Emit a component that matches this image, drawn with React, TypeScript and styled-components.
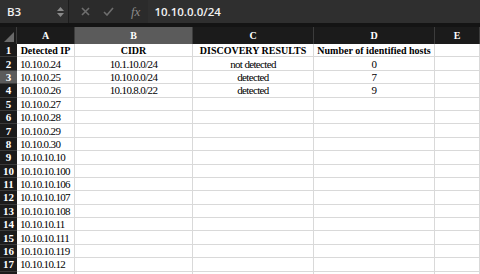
import React from 'react';
import styled, { createGlobalStyle } from 'styled-components';

/**
 * Define stylesheet.
 */
const GlobalStyle = createGlobalStyle`
    html, body {
        margin: 0;
        padding: 0;
        background-color: #ffffff;
        overflow: hidden;
    }
`;
const UI = styled.div`
    width: 480px;
    height: 274px;
    overflow: hidden;
    background-color: #fff;
`;
const Toolbar = styled.div`
    display: flex;
    align-items: center;
    height: 23px;
    background-color: #2b2b2b;
    border-bottom: 4px solid #141414;
    font-family: "Open Sans", "Liberation Sans", sans-serif;
    color: #f2f2f2;
`;
const NameBox = styled.div`
    display: flex;
    align-items: center;
    justify-content: space-between;
    box-sizing: border-box;
    width: 69px;
    height: 100%;
    padding: 0 4px 0 7px;
    background-color: #303030;
    border-right: 1px solid #1d1d1d;
    font-size: 11.5px;
    font-weight: 600;
`;
const Stepper = styled.div`
    display: flex;
    flex-direction: column;
    gap: 2px;
`;
const Actions = styled.div`
    display: flex;
    align-items: center;
    gap: 13px;
    padding: 0 8px 0 12px;
    height: 100%;
`;
const Fx = styled.span`
    font-family: "Liberation Serif", serif;
    font-style: italic;
    font-size: 13px;
    color: #8a8a8a;
    margin-left: 4px;
`;
const FormulaInput = styled.div`
    display: flex;
    align-items: center;
    flex: 1;
    height: 100%;
    padding-left: 6px;
    background-color: #2f2f2f;
    font-size: 11.5px;
    font-weight: 600;
`;
const Grid = styled.div`
    display: grid;
    grid-template-columns: 17px 58px 118px 121px 121px 1fr;
    grid-template-rows: 17px;
    grid-auto-rows: 13.4px;
    font-family: "Liberation Serif", "Times New Roman", serif;
    font-size: 10px;
    color: #000;
`;
const Row = styled.div`
    display: contents;
`;
const ColHead = styled.div<{ active?: boolean }>`
    display: flex;
    align-items: center;
    justify-content: center;
    background-color: ${(p) => p.active ? '#5b5b5b' : '#1b1b1b'};
    border-right: 1px solid #3c3c3c;
    color: #fff;
    font-weight: 700;
    font-size: 10px;
`;
const Corner = styled.div`
    position: relative;
    background-color: #1b1b1b;
    border-right: 1px solid #3c3c3c;
`;
const CornerMark = styled.svg`
    position: absolute;
    right: 2px;
    bottom: 2px;
`;
const RowNum = styled.div<{ active?: boolean }>`
    display: flex;
    align-items: center;
    justify-content: center;
    background-color: ${(p) => p.active ? '#5b5b5b' : '#1b1b1b'};
    border-bottom: 1px solid #3a3a3a;
    color: #fff;
    font-weight: 700;
    font-size: 11px;
`;
const Cell = styled.div<{ align?: string; bold?: boolean }>`
    display: flex;
    align-items: center;
    justify-content: ${(p) => p.align === 'center' ? 'center' : 'flex-start'};
    padding: 0 3px;
    overflow: hidden;
    white-space: nowrap;
    border-right: 1px solid #d9d9d9;
    border-bottom: 1px solid #d9d9d9;
    font-weight: ${(p) => p.bold ? 700 : 400};
    font-size: ${(p) => p.bold ? '10px' : '11px'};
    letter-spacing: ${(p) => p.bold ? '0' : '-0.65px'};
`;

/**
 * Data.
 */
const rows: string[][] = [
    ['Detected IP', 'CIDR', 'DISCOVERY RESULTS', 'Number of identified hosts', ''],
    ['10.10.0.24', '10.1.10.0/24', 'not detected', '0', ''],
    ['10.10.0.25', '10.10.0.0/24', 'detected', '7', ''],
    ['10.10.0.26', '10.10.8.0/22', 'detected', '9', ''],
    ['10.10.0.27', '', '', '', ''],
    ['10.10.0.28', '', '', '', ''],
    ['10.10.0.29', '', '', '', ''],
    ['10.10.0.30', '', '', '', ''],
    ['10.10.10.10', '', '', '', ''],
    ['10.10.10.100', '', '', '', ''],
    ['10.10.10.106', '', '', '', ''],
    ['10.10.10.107', '', '', '', ''],
    ['10.10.10.108', '', '', '', ''],
    ['10.10.10.11', '', '', '', ''],
    ['10.10.10.111', '', '', '', ''],
    ['10.10.10.119', '', '', '', ''],
    ['10.10.10.12', '', '', '', ''],
    ['', '', '', '', ''],
];

export default function App() {
    return (
        <UI>
            <GlobalStyle />
            <Toolbar>
                <NameBox>
                    <span>B3</span>
                    <Stepper>
                        <svg width="7" height="4" viewBox="0 0 7 4"><path d="M0 4 L3.5 0 L7 4 Z" fill="#8a8a8a" /></svg>
                        <svg width="7" height="4" viewBox="0 0 7 4"><path d="M0 0 L3.5 4 L7 0 Z" fill="#8a8a8a" /></svg>
                    </Stepper>
                </NameBox>
                <Actions>
                    <svg width="9" height="9" viewBox="0 0 9 9"><path d="M1 1 L8 8 M8 1 L1 8" stroke="#6e6e6e" strokeWidth="1.6" /></svg>
                    <svg width="11" height="9" viewBox="0 0 11 9"><path d="M1 5 L4 8 L10 1" stroke="#6e6e6e" strokeWidth="1.6" fill="none" /></svg>
                    <Fx>fx</Fx>
                </Actions>
                <FormulaInput>10.10.0.0/24</FormulaInput>
            </Toolbar>
            <Grid>
                <Row>
                    <Corner>
                        <CornerMark width="10" height="10" viewBox="0 0 10 10">
                            <path d="M10 0 L10 10 L0 10 Z" fill="#6a6a6a" />
                        </CornerMark>
                    </Corner>
                    {['A', 'B', 'C', 'D', 'E'].map((c) => (
                        <ColHead key={c} active={c === 'B'}>{c}</ColHead>
                    ))}
                </Row>
                {rows.map((row, i) => (
                    <Row key={i}>
                        <RowNum active={i === 2}>{i + 1}</RowNum>
                        {row.map((v, j) => (
                            <Cell key={j} bold={i === 0} align={j === 0 && i > 0 ? 'left' : 'center'}>{v}</Cell>
                        ))}
                    </Row>
                ))}
            </Grid>
        </UI>
    );
}
